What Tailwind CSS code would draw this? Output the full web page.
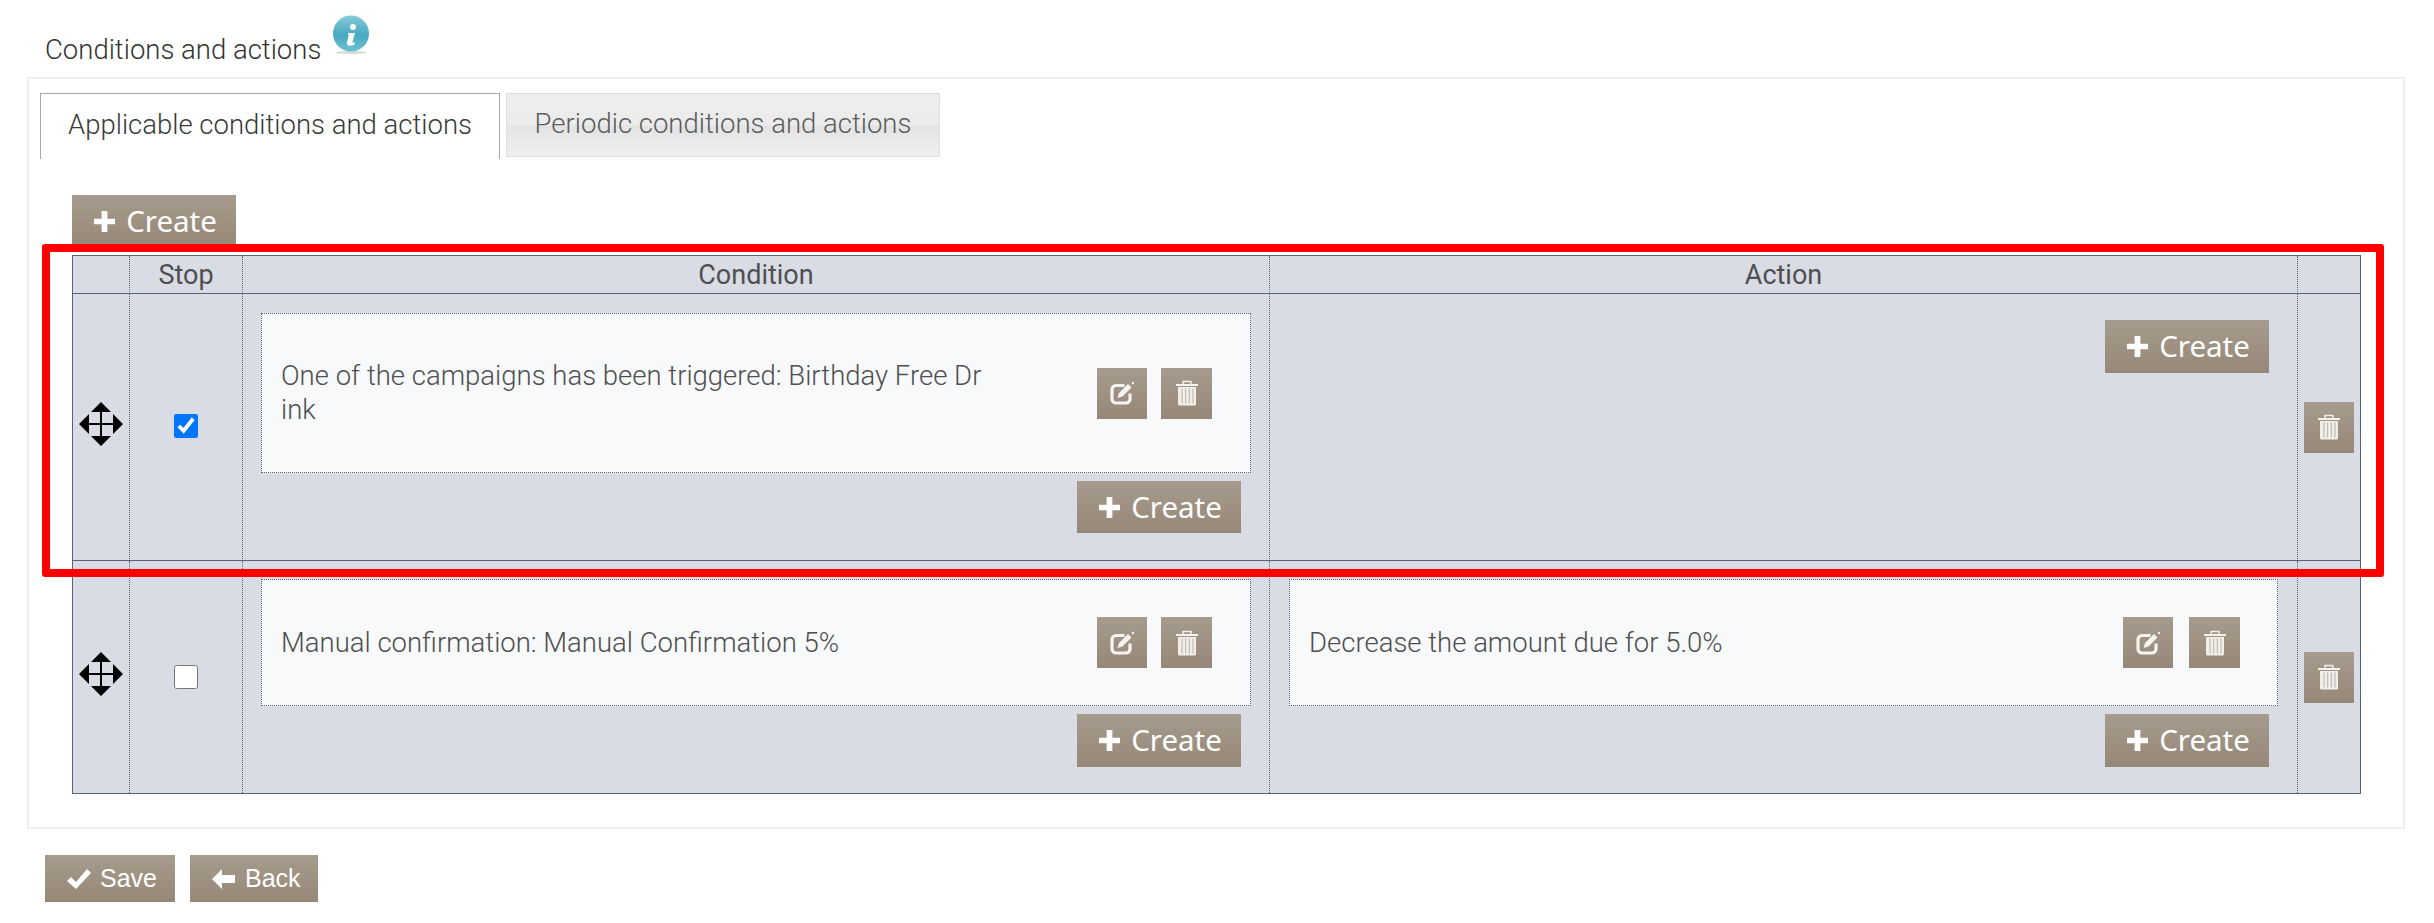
<!DOCTYPE html>
<html lang="en">
  <head>
    <meta charset="UTF-8" />
    <title>Conditions and actions</title>
    <script src="https://cdn.jsdelivr.net/npm/@tailwindcss/browser@4"></script>
  </head>
  <body class="relative h-[923px] overflow-hidden bg-white font-['Roboto',sans-serif] font-light text-[#4f4f4f]">
    <svg width="0" height="0" class="absolute">
      <defs>
        <symbol id="plus" viewBox="0 0 22 22"><path d="M8 0h6v8h8v6h-8v8H8v-8H0V8h8z" fill="#fff" /></symbol>
        <symbol id="edit" viewBox="0 0 24 24">
          <path d="M14.500 4.500H6a4 4 0 0 0-4 4v9.500a4 4 0 0 0 4 4h10a4 4 0 0 0 4-4v-5.500" fill="none" stroke="#f6f4f1" stroke-width="3.200" />
          <path d="M7.500 17l1.500-5L18 3l3.500 3.500-9 9z" fill="#f6f4f1" />
          <circle cx="23" cy="2" r="1.200" fill="#f6f4f1" />
        </symbol>
        <symbol id="trash" viewBox="0 0 22 26">
          <path d="M7 4V1.500h8V4" fill="none" stroke="#f4f2ef" stroke-width="1.400" />
          <path d="M0 4h22v2H0z" fill="#f4f2ef" />
          <path d="M2 7h18v17a1.500 1.500 0 0 1-1.500 1.500h-15A1.500 1.500 0 0 1 2 24z" fill="#f1eeea" />
          <path d="M6 8.500v15M9.700 8.500v15M13.300 8.500v15M17 8.500v15" stroke="#b9b0a4" stroke-width="1" />
        </symbol>
        <symbol id="move" viewBox="0 0 44 44">
          <path d="M22 0l10 10H12zM22 44L12 34h20zM0 22l10-10v20zM44 22L34 32V12z" fill="#000" />
          <path d="M22 8v28M8 22h28" stroke="#000" stroke-width="2" />
        </symbol>
      </defs>
    </svg>

    <div class="flex h-[77px] items-end pb-[12px] pl-[45px]">
      <h2 class="text-[27.5px] leading-[30px] font-light text-[#333]">Conditions and actions</h2>
      <svg class="mb-[11px] ml-[11px] h-[39px] w-[38px]" viewBox="0 0 38 39">
        <defs>
          <linearGradient id="drop" x1="0" y1="0" x2="0" y2="1">
            <stop offset="0" stop-color="#86cbd8" />
            <stop offset="0.55" stop-color="#47a8c0" />
            <stop offset="1" stop-color="#6ec1d1" />
          </linearGradient>
        </defs>
        <ellipse cx="19" cy="37.500" rx="16" ry="1.500" fill="#d8d8d8" />
        <ellipse cx="19" cy="18.500" rx="18" ry="18" fill="url(#drop)" />
        <circle cx="21" cy="12" r="3" fill="#fff" />
        <path d="M16 18h7l-2.500 9q0 1.500 2.500 0l-.8 2.500q-3 1.800-5.500 1t-1.700-3.500l1.800-7H16z" fill="#fff" />
      </svg>
    </div>

    <main class="ml-[27px] h-[752px] w-[2378px] border-2 border-[#f0f0f0] pl-[11px] pt-[14px]">
      <div class="flex items-start gap-[6px]">
        <div class="flex h-[66px] w-[460px] items-center justify-center border border-b-0 border-[#a8a8a8] bg-white pb-[4px] text-[27.5px] text-[#3a3a3a]">Applicable conditions and actions</div>
        <div class="flex h-[64px] w-[434px] items-center justify-center border border-[#dedede] bg-[linear-gradient(#eeeeee_0%,#ebebeb_50%,#e3e3e3_52%,#f0f0f0_100%)] pb-[2px] text-[27.5px] text-[#5c5c5c]">Periodic conditions and actions</div>
      </div>

      <button class="ml-[32px] mt-[36px] flex h-[52px] w-[164px] items-center justify-center gap-[11px] bg-gradient-to-b from-[#a69b8d] to-[#968878] pl-[3px] font-['Noto_Sans',sans-serif] text-[29.5px] font-normal text-white">
        <svg class="h-[21px] w-[21px]"><use href="#plus" /></svg>Create
      </button>

      <div class="ml-[32px] mt-[8px] grid w-[2289px] grid-cols-[57px_113px_1027px_1028px_62px] grid-rows-[38px_267px_232px] border border-[#56647a] bg-[#d9dce4] text-[#4f4f4f]">
        <div class="border-b border-r border-[#56647a] [border-right-style:dotted]"></div>
        <div class="flex items-center justify-center border-b border-r border-[#56647a] pt-[2px] text-[27px] font-normal [border-right-style:dotted]">Stop</div>
        <div class="flex items-center justify-center border-b border-r border-[#56647a] pt-[2px] text-[27px] font-normal [border-right-style:dotted]">Condition</div>
        <div class="flex items-center justify-center border-b border-r border-[#56647a] pt-[2px] text-[27px] font-normal [border-right-style:dotted]">Action</div>
        <div class="border-b border-[#56647a]"></div>

        <div class="flex items-center justify-center border-b border-r border-[#56647a] [border-right-style:dotted]"><svg class="mb-[6px] h-[44px] w-[44px]"><use href="#move" /></svg></div>
        <div class="flex items-center justify-center border-b border-r border-[#56647a] [border-right-style:dotted]"><input type="checkbox" checked class="mb-[2px] mr-[1px] h-[24px] w-[24px]" /></div>
        <div class="border-b border-r border-[#56647a] pl-[18px] pt-[19px] [border-right-style:dotted]">
          <div class="flex h-[160px] w-[990px] items-center border border-dotted border-[#56647a] bg-[#f8f9fb] pl-[19px]">
            <p class="w-[703px] break-all text-[27.5px] leading-[34px]">One of the campaigns has been triggered: Birthday Free Drink</p>
            <div class="ml-[113px] flex gap-[14px]">
              <button class="flex h-[51px] w-[50px] items-center justify-center bg-gradient-to-b from-[#a69b8d] to-[#968878]"><svg class="h-[24px] w-[24px]"><use href="#edit" /></svg></button>
              <button class="flex h-[51px] w-[51px] items-center justify-center bg-gradient-to-b from-[#a69b8d] to-[#968878]"><svg class="h-[26px] w-[22px]"><use href="#trash" /></svg></button>
            </div>
          </div>
          <button class="ml-[816px] mt-[8px] flex h-[52px] w-[164px] items-center justify-center gap-[11px] bg-gradient-to-b from-[#a69b8d] to-[#968878] pl-[3px] font-['Noto_Sans',sans-serif] text-[29.5px] font-normal text-white">
            <svg class="h-[21px] w-[21px]"><use href="#plus" /></svg>Create
          </button>
        </div>
        <div class="border-b border-r border-[#56647a] pt-[26px] [border-right-style:dotted]">
          <button class="ml-[835px] flex h-[53px] w-[164px] items-center justify-center gap-[11px] bg-gradient-to-b from-[#a69b8d] to-[#968878] pl-[3px] font-['Noto_Sans',sans-serif] text-[29.5px] font-normal text-white">
            <svg class="h-[21px] w-[21px]"><use href="#plus" /></svg>Create
          </button>
        </div>
        <div class="flex items-center justify-center border-b border-[#56647a]">
          <button class="flex h-[51px] w-[50px] items-center justify-center bg-gradient-to-b from-[#a69b8d] to-[#968878]"><svg class="h-[26px] w-[22px]"><use href="#trash" /></svg></button>
        </div>

        <div class="flex items-center justify-center border-r border-dotted border-[#56647a]"><svg class="mb-[7px] h-[44px] w-[44px]"><use href="#move" /></svg></div>
        <div class="flex items-center justify-center border-r border-dotted border-[#56647a]"><input type="checkbox" class="mr-[1px] h-[24px] w-[24px]" /></div>
        <div class="border-r border-dotted border-[#56647a] pl-[18px] pt-[18px]">
          <div class="flex h-[127px] w-[990px] items-center border border-dotted border-[#56647a] bg-[#f8f9fb] pl-[19px]">
            <p class="w-[703px] text-[27.5px] leading-[34px]">Manual confirmation: Manual Confirmation 5%</p>
            <div class="ml-[113px] flex gap-[14px]">
              <button class="flex h-[51px] w-[50px] items-center justify-center bg-gradient-to-b from-[#a69b8d] to-[#968878]"><svg class="h-[24px] w-[24px]"><use href="#edit" /></svg></button>
              <button class="flex h-[51px] w-[51px] items-center justify-center bg-gradient-to-b from-[#a69b8d] to-[#968878]"><svg class="h-[26px] w-[22px]"><use href="#trash" /></svg></button>
            </div>
          </div>
          <button class="ml-[816px] mt-[8px] flex h-[53px] w-[164px] items-center justify-center gap-[11px] bg-gradient-to-b from-[#a69b8d] to-[#968878] pl-[3px] font-['Noto_Sans',sans-serif] text-[29.5px] font-normal text-white">
            <svg class="h-[21px] w-[21px]"><use href="#plus" /></svg>Create
          </button>
        </div>
        <div class="border-r border-dotted border-[#56647a] pl-[19px] pt-[18px]">
          <div class="flex h-[127px] w-[989px] items-center border border-dotted border-[#56647a] bg-[#f8f9fb] pl-[19px]">
            <p class="w-[734px] text-[27.5px] leading-[34px]">Decrease the amount due for 5.0%</p>
            <div class="ml-[80px] flex gap-[16px]">
              <button class="flex h-[51px] w-[50px] items-center justify-center bg-gradient-to-b from-[#a69b8d] to-[#968878]"><svg class="h-[24px] w-[24px]"><use href="#edit" /></svg></button>
              <button class="flex h-[51px] w-[51px] items-center justify-center bg-gradient-to-b from-[#a69b8d] to-[#968878]"><svg class="h-[26px] w-[22px]"><use href="#trash" /></svg></button>
            </div>
          </div>
          <button class="ml-[816px] mt-[8px] flex h-[53px] w-[164px] items-center justify-center gap-[11px] bg-gradient-to-b from-[#a69b8d] to-[#968878] pl-[3px] font-['Noto_Sans',sans-serif] text-[29.5px] font-normal text-white">
            <svg class="h-[21px] w-[21px]"><use href="#plus" /></svg>Create
          </button>
        </div>
        <div class="flex items-center justify-center">
          <button class="flex h-[51px] w-[50px] items-center justify-center bg-gradient-to-b from-[#a69b8d] to-[#968878]"><svg class="h-[26px] w-[22px]"><use href="#trash" /></svg></button>
        </div>
      </div>
    </main>

    <div class="ml-[45px] mt-[26px] flex gap-[15px] font-['Liberation_Sans',sans-serif] text-[25px] font-normal text-white">
      <button class="flex h-[47px] w-[130px] items-center gap-[9px] bg-gradient-to-b from-[#a69b8d] to-[#968878] pl-[22px]">
        <svg class="h-[22px] w-[24px]" viewBox="0 0 24 22"><path d="M0 13l4-4 5 5L20 1l4 4L9 21z" fill="#fff" /></svg>Save
      </button>
      <button class="flex h-[47px] w-[128px] items-center gap-[10px] bg-gradient-to-b from-[#a69b8d] to-[#968878] pl-[22px]">
        <svg class="h-[20px] w-[23px]" viewBox="0 0 23 20"><path d="M10 0v6h13v8H10v6L0 10z" fill="#fff" /></svg>Back
      </button>
    </div>

    <!-- annotation over the first row -->
    <div class="pointer-events-none absolute left-[42px] top-[244px] h-[333px] w-[2342px] rounded-[3px] border-[8px] border-[#ff0000]"></div>
  </body>
</html>
